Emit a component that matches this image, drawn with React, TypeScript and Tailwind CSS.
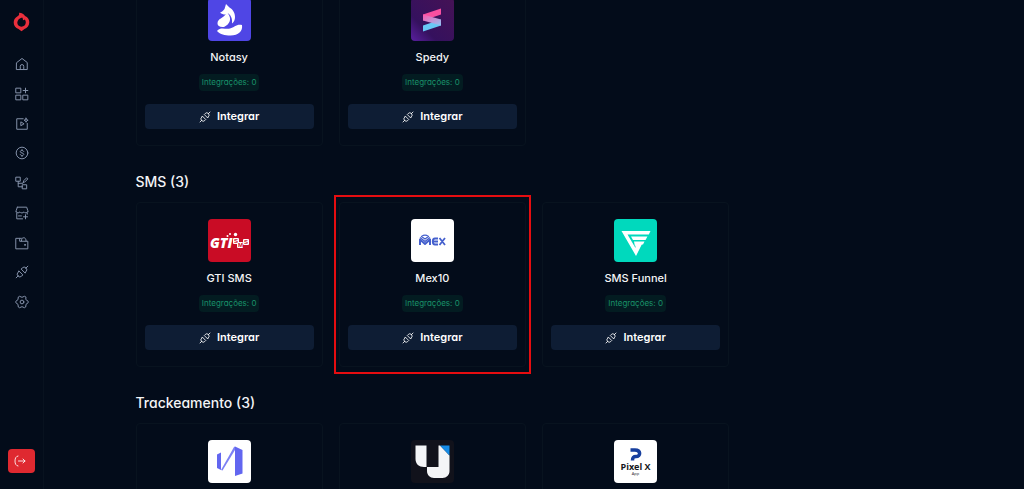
import React from 'react';

interface IconProps {
  className?: string;
}

interface Integration {
  id: string;
  name?: string;
  count?: number;
  logo: React.ReactNode;
  highlighted?: boolean;
}

interface Section {
  title?: string;
  items: Integration[];
}

const Icon: React.FC<IconProps & { children: React.ReactNode }> = ({ className, children }) => (
  <svg
    viewBox="0 0 24 24"
    fill="none"
    stroke="currentColor"
    strokeWidth={1.7}
    strokeLinecap="round"
    strokeLinejoin="round"
    className={className}
    aria-hidden="true"
  >
    {children}
  </svg>
);

const PlugIcon: React.FC<IconProps> = ({ className }) => (
  <Icon className={className}>
    <path d="M5.500 18.500L2 22M18.500 5.500L22 2" />
    <path d="M7 10.500l6.500 6.500-2 2a4.400 4.400 0 0 1-6.300 0 4.400 4.400 0 0 1 0-6.500z" />
    <path d="M17 13.500L10.500 7l2-2a4.400 4.400 0 0 1 6.300 0 4.400 4.400 0 0 1 0 6.500z" />
  </Icon>
);

// Sidebar links, top to bottom
const navItems = [
  {
    label: 'Início',
    icon: (
      <>
        <path d="M3 9.500L12 2.500l9 7V21.500H3z" />
        <path d="M9 21v-5a3 3 0 0 1 6 0v5" />
      </>
    ),
  },
  {
    label: 'Produtos',
    icon: (
      <>
        <path d="M2 2h8v8H2zM2 14h8v8H2zM14 14h8v8h-8z" />
        <path d="M18 2v8M14 6h8" />
      </>
    ),
  },
  {
    label: 'Área de membros',
    icon: (
      <>
        <path d="M14 3H3v18h18V11" />
        <path d="M10 9v6l5-3z" />
        <path d="M19 2l1 2.500L22.500 5.500 20 6.500 19 9l-1-2.500L15.500 5.500 18 4.500z" />
      </>
    ),
  },
  {
    label: 'Financeiro',
    icon: (
      <>
        <circle cx="12" cy="12" r="10" />
        <path d="M15 9.500c-.4-1.200-1.500-1.800-3-1.800s-3 .7-3 2c0 3 6 1.500 6 4.500 0 1.300-1.400 2.100-3 2.100s-2.800-.7-3-2M12 6v1.500M12 16.500V18" />
      </>
    ),
  },
  {
    label: 'Funis',
    icon: (
      <>
        <path d="M2 2h7v7H2zM13 15h7v7h-7z" />
        <path d="M5.500 9v9.500H13M5.500 12.500H13" />
        <path d="M14 11l1-3L20 3l2 2-5 5z" />
      </>
    ),
  },
  {
    label: 'Loja',
    icon: (
      <>
        <path d="M4 2h16l2 6v2M2 10V8l2-6M3 12v10h10M21 12v2" />
        <path d="M2 10c1 2.500 5 2.500 6.500 0 1 2.500 5.500 2.500 7 0 1 2.500 5.500 2.500 6.500 0M6 17h5" />
        <path d="M18 15v7M14.500 18.500h7" />
      </>
    ),
  },
  {
    label: 'Carteira',
    icon: (
      <>
        <path d="M2 4h6v5h14v13H2z" />
        <path d="M8 4h3M11 8.500C11 5 12.500 3 15 3s4 2 4 5.500" />
        <path d="M17 15h.5" strokeWidth="3" />
      </>
    ),
  },
  { label: 'Integrações', icon: null },
  {
    label: 'Configurações',
    icon: (
      <>
        <path d="M18.900 8L22.600 10.800V13.200L18.900 16 18.300 20.600 16.200 21.800 12 20 7.800 21.800 5.700 20.600 5.100 16 1.400 13.200V10.800L5.100 8 5.700 3.400 7.800 2.200 12 4 16.200 2.200 18.300 3.400z" />
        <circle cx="12" cy="12" r="3.200" />
      </>
    ),
  },
];

const NotasyLogo = () => (
  <svg viewBox="0 0 43 43" className="size-full bg-[#4f46e5]" aria-hidden="true">
    <g fill="#fff">
      <path d="M18 6l3.500 3.500c3 1.500 5.500 5 5.500 9.500 0 3-1 5-3 6.500.5-4-.5-7.500-3.500-10l-2 1c-2.500.3-4.500-.3-6.500-1.700 2-1 3-1.800 4.500-3.800z" />
      <path d="M20 15.500c4 5.500 2 10.500-4 13.500-4 .5-6.500-1-6.500-3.500 0-5 6-5.500 8.500-9.500z" />
      <path d="M9 33c3.500-4.500 8-1.500 13-2.500 4.500-1 6-4.500 12-3.500 1 6-3.500 10.500-11.500 10.500-6 0-10-1-13.500-4.500z" />
    </g>
  </svg>
);

const SpedyLogo = () => (
  <svg viewBox="0 0 43 43" className="size-full" aria-hidden="true">
    <defs>
      <linearGradient id="spedy-bg" x1="0" y1="1" x2="1" y2="0">
        <stop offset="0" stopColor="#5a20a0" />
        <stop offset="0.3" stopColor="#35115e" />
        <stop offset="1" stopColor="#451255" />
      </linearGradient>
      <linearGradient id="spedy-mid" x1="0" y1="0" x2="1" y2="1">
        <stop offset="0" stopColor="#ff57ad" />
        <stop offset="1" stopColor="#8fc5f5" />
      </linearGradient>
    </defs>
    <rect width="43" height="43" fill="url(#spedy-bg)" />
    <path fill="#f94fa0" d="M12 16.500L30 10.500v6L12 22.500z" />
    <path fill="#68c8f5" d="M12 27.500L30 21.500v6L12 33.500z" />
    <path fill="url(#spedy-mid)" d="M12 16.500l18 5v6l-18-5z" />
  </svg>
);

const GtiLogo = () => (
  <svg viewBox="0 0 43 43" className="size-full bg-[#c90c25]" aria-hidden="true">
    <text x="2" y="29" fill="#fff" fontFamily="Open Sans, sans-serif" fontSize="14" fontWeight="800" fontStyle="italic">
      GTI
    </text>
    <g fill="#fff">
      <circle cx="27.500" cy="15.500" r="1.700" />
      <circle cx="22" cy="15" r="1" />
      <circle cx="19.500" cy="17" r="1" />
      <rect x="25" y="19" width="6" height="6" rx="1" />
      <rect x="29" y="23" width="6" height="6" rx="1" />
      <rect x="35" y="20" width="6" height="6" rx="1" />
    </g>
    <g fill="#c90c25" fontFamily="Liberation Sans, sans-serif" fontSize="6" fontWeight="700">
      <text x="26" y="24">S</text>
      <text x="30" y="28">M</text>
      <text x="36" y="25">S</text>
    </g>
  </svg>
);

const MexLogo = () => (
  <svg viewBox="0 0 43 43" className="size-full bg-white" aria-hidden="true">
    <g fill="none" stroke="#4560cd" strokeWidth="2" strokeLinejoin="round">
      <path d="M9 26v-5.500l5 4.500 5-4.500V26" />
      <path d="M9 18.500l5 4 5-4M10.500 17.500c2-1.500 5-1.500 7 0l-3.500 2.500z" strokeWidth="1.300" />
      <path d="M27 19.500h-3c-3 0-3 6 0 6h3M22 22.500h5M28.500 19l5.500 7M34 19l-5.500 7" strokeWidth="1.800" />
    </g>
  </svg>
);

const FunnelLogo = () => (
  <svg viewBox="0 0 43 43" className="size-full bg-[#00d9bd]" aria-hidden="true">
    <path fill="#fff" d="M7.500 12h29l-1.700 3.500H13.500l8 13.500v-4h6.500l-6 12z" />
    <path fill="#fff" d="M17 17.500h16.500L31.500 21H19zM20 22.500h10.500l-1.500 3h-6.500l-1.500 2z" />
  </svg>
);

const TrackLogo = () => (
  <svg viewBox="0 0 43 43" className="size-full bg-white" aria-hidden="true">
    <path fill="#6266f0" d="M9 14.500l4-2V30l-4-2zM27 6.500l7.500 3.500v23.500L27 36z" />
    <path fill="#7d81f4" d="M13 30L26 7l1-.5V10L14.500 30.500z" />
  </svg>
);

const ULogo = () => (
  <svg viewBox="0 0 43 43" className="size-full bg-[#11121b]" aria-hidden="true">
    <path fill="#f4f5f7" d="M4.500 5.500h11V27H13c-5 0-8.500-3-8.500-8zM16 27h11.500V5.500h1.500l9.500 10V31c0 4-3 7-7 7H23c-4 0-7-3-7-7z" />
    <path fill="#168be6" d="M29 5.500h9.500v10z" />
  </svg>
);

const PixelXLogo = () => (
  <svg viewBox="0 0 43 43" className="size-full bg-white" aria-hidden="true">
    <path fill="none" stroke="#173f9e" strokeWidth="3.500" d="M16.500 10H21c6 0 6 6.500 1 6.500-2.500 0-3.500 1-3.500 4" />
    <text x="21.500" y="30" textAnchor="middle" fill="#15161c" fontFamily="Open Sans, sans-serif" fontSize="9" fontWeight="700">
      Pixel X
    </text>
    <text x="21.500" y="35" textAnchor="middle" fill="#15161c" fontFamily="Open Sans, sans-serif" fontSize="4">
      App
    </text>
  </svg>
);

const sections: Section[] = [
  {
    items: [
      { id: 'notasy', name: 'Notasy', count: 0, logo: <NotasyLogo /> },
      { id: 'spedy', name: 'Spedy', count: 0, logo: <SpedyLogo /> },
    ],
  },
  {
    title: 'SMS',
    items: [
      { id: 'gti', name: 'GTI SMS', count: 0, logo: <GtiLogo /> },
      { id: 'mex10', name: 'Mex10', count: 0, logo: <MexLogo />, highlighted: true },
      { id: 'funnel', name: 'SMS Funnel', count: 0, logo: <FunnelLogo /> },
    ],
  },
  {
    title: 'Trackeamento',
    items: [
      { id: 'track-1', logo: <TrackLogo /> },
      { id: 'track-2', logo: <ULogo /> },
      { id: 'track-3', logo: <PixelXLogo /> },
    ],
  },
];

const Sidebar = () => (
  <aside className="flex w-11 shrink-0 flex-col items-center border-r border-[#08121f] pt-3 pb-4">
    <a href="#" aria-label="Página inicial">
      <svg viewBox="0 0 16 20" className="h-5 w-[17px]" aria-hidden="true">
        <path
          fill="#e92f3c"
          fillRule="evenodd"
          d="M5.500.8c3 .2 5 1.500 6 3.200 2.800 1 4.300 3.400 4.300 6.300 0 3.400-2 5.800-4.800 6.800L8 19.200 5 17.100C2 16.100.2 13.700.2 10.600c0-2.600 1.200-4.600 3.500-6C5.500 3.500 6 2.500 5.500.8zM8.700 5.500C6 6 3.800 8.200 3.800 10.800c0 2.200 1.800 3.900 4.100 3.900 2.600 0 4.400-1.900 4.400-4.400 0-1-.4-2-1-2.700-.5.500-1 .7-1.900.7.200-.8 0-2-.7-2.800z"
        />
      </svg>
    </a>
    <nav className="mt-[25px] flex h-[252px] flex-col justify-between text-[#8592aa]">
      {navItems.map((item) => (
        <a key={item.label} href="#" aria-label={item.label}>
          {item.icon ? <Icon className="size-3.5">{item.icon}</Icon> : <PlugIcon className="size-3.5" />}
        </a>
      ))}
    </nav>
    <button
      type="button"
      aria-label="Sair"
      className="mt-auto flex h-6 w-[27px] items-center justify-center rounded bg-[#df2930] text-white"
    >
      <Icon className="mr-1 size-3">
        <path d="M8 2C4 2.500 2 6.500 2 12s2 9.500 6 10M9 12h13M18 8l4 4-4 4" />
      </Icon>
    </button>
  </aside>
);

const IntegrationCard: React.FC<{ item: Integration }> = ({ item }) => (
  <article className="relative flex min-h-[165px] flex-col items-center rounded border border-[#08131f] px-2 py-4">
    <div className="size-[43px] overflow-hidden rounded">{item.logo}</div>
    {item.name && (
      <>
        <h3 className="mt-2 text-[11px] leading-4 font-medium text-gray-100">{item.name}</h3>
        <span className="mt-[9px] rounded-sm bg-[#031c21] px-[3px] text-[8px] leading-[17px] text-[#199169]">
          Integrações: {item.count}
        </span>
        <button
          type="button"
          className="mt-[13px] flex h-[25px] w-full items-center justify-center gap-1.5 rounded bg-[#0e1d34] text-[11px] font-semibold text-white"
        >
          <PlugIcon className="size-3" />
          Integrar
        </button>
      </>
    )}
    {item.highlighted && (
      <div className="pointer-events-none absolute -inset-x-[6px] -inset-y-[8px] border-2 border-[#e60d10]" />
    )}
  </article>
);

const App: React.FC = () => {
  return (
    <div className="flex h-screen overflow-hidden bg-[#030c1a] font-['Inter',sans-serif] [font-feature-settings:'cv11'] [font-variation-settings:'opsz'_24]">
      <Sidebar />
      {/* List is scrolled so that the first row is partly out of view */}
      <main className="min-w-0 flex-1">
        <div className="mx-auto -mt-[19px] flex max-w-[797px] flex-col gap-6">
          {sections.map((section, index) => (
            <section key={index}>
              {section.title && (
                <h2 className="mb-2 text-sm leading-6 font-medium text-gray-100">
                  {section.title} ({section.items.length})
                </h2>
              )}
              <div className="grid grid-cols-4 gap-4">
                {section.items.map((item) => (
                  <IntegrationCard key={item.id} item={item} />
                ))}
              </div>
            </section>
          ))}
        </div>
      </main>
    </div>
  );
};

export default App;
